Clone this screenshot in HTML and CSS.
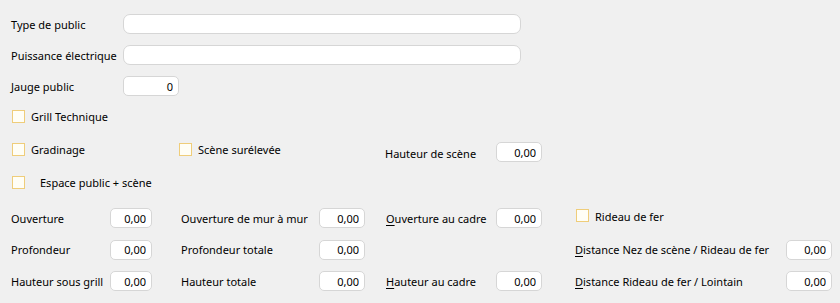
FILE: index.html
```html
<html>
<head>
    <title>Public et scène</title>
    <link rel="stylesheet" href="styles.css">
</head>
<body>
    <div class="panel">
        <div class="field wide first">
            <label class="lbl">Type de public</label>
            <input type="text" class="txt long" value="" />
        </div>
        <div class="field wide">
            <label class="lbl">Puissance électrique</label>
            <input type="text" class="txt long" value="" />
        </div>
        <div class="field wide third">
            <label class="lbl">Jauge public</label>
            <input type="text" class="txt num jauge" value="0" />
        </div>

        <div class="check-row grill">
            <span class="check"></span><span class="check-label">Grill Technique</span>
        </div>

        <div class="stage-row">
            <div class="check-row gradin">
                <span class="check"></span><span class="check-label">Gradinage</span>
            </div>
            <div class="check-row raised">
                <span class="check"></span><span class="check-label">Scène surélevée</span>
            </div>
            <div class="stage-height">
                <label class="lbl">Hauteur de scène</label>
                <input type="text" class="txt num" value="0,00" />
            </div>
        </div>

        <div class="check-row espace">
            <span class="check"></span><span class="check-label spaced">Espace public + scène</span>
        </div>

        <div class="measures">
            <label class="cell">Ouverture</label>
            <div class="cell"><input type="text" class="txt num small" value="0,00" /></div>
            <label class="cell">Ouverture de mur à mur</label>
            <div class="cell"><input type="text" class="txt num" value="0,00" /></div>
            <label class="cell"><u>O</u>uverture au cadre</label>
            <div class="cell"><input type="text" class="txt num" value="0,00" /></div>
            <div class="cell top"><span class="check"></span><span class="check-label">Rideau de fer</span></div>
            <div class="cell"></div>

            <label class="cell">Profondeur</label>
            <div class="cell"><input type="text" class="txt num small" value="0,00" /></div>
            <label class="cell">Profondeur totale</label>
            <div class="cell"><input type="text" class="txt num" value="0,00" /></div>
            <div class="cell"></div>
            <div class="cell"></div>
            <label class="cell"><u>D</u>istance Nez de scène / Rideau de fer</label>
            <div class="cell"><input type="text" class="txt num" value="0,00" /></div>

            <label class="cell">Hauteur sous grill</label>
            <div class="cell"><input type="text" class="txt num small" value="0,00" /></div>
            <label class="cell">Hauteur totale</label>
            <div class="cell"><input type="text" class="txt num" value="0,00" /></div>
            <label class="cell"><u>H</u>auteur au cadre</label>
            <div class="cell"><input type="text" class="txt num" value="0,00" /></div>
            <label class="cell"><u>D</u>istance Rideau de fer / Lointain</label>
            <div class="cell"><input type="text" class="txt num" value="0,00" /></div>
        </div>
    </div>
</body>
</html>
```

FILE: styles.css
```css
body {
    margin: 0;
    background: #f0f0f0;
    font-family: "Noto Sans", "Open Sans", sans-serif;
    font-size: 11px;
    color: #000;
}
.panel {
    padding: 14px 0 0 11px;
}
.field {
    display: flex;
    align-items: center;
    height: 20px;
    margin-bottom: 11px;
}
.field.third {
    margin-top: 1px;
    margin-bottom: 14px;
}
.field .lbl {
    width: 112px;
    white-space: nowrap;
}
.txt {
    box-sizing: border-box;
    height: 20px;
    border: 1px solid #d6d6d6;
    border-radius: 5px;
    background: #fff;
    font-family: inherit;
    font-size: 11px;
    color: #000;
    padding: 0 5px;
    margin: 0;
    outline: none;
    width: 46px;
}
.txt.long {
    width: 398px;
    border-radius: 7px;
}
.txt.jauge {
    width: 56px;
}
.txt.small {
    width: 42px;
}
.num {
    text-align: right;
}
.check-row {
    display: flex;
    align-items: center;
    height: 13px;
}
.check {
    display: inline-block;
    box-sizing: border-box;
    width: 13px;
    height: 13px;
    border: 1px solid #efcd7a;
    background: #fffef6;
    margin-left: 1px;
    flex-shrink: 0;
}
.check-label {
    margin-left: 6px;
    white-space: nowrap;
}
.check-label.spaced {
    margin-left: 15px;
}
.stage-row {
    display: flex;
    align-items: flex-start;
    margin-top: 19px;
    height: 20px;
}
.stage-row .gradin {
    margin-top: 1px;
    width: 167px;
}
.stage-row .raised {
    margin-top: 1px;
    width: 207px;
}
.stage-height {
    display: flex;
    align-items: center;
}
.stage-height .lbl {
    width: 111px;
    padding-top: 2px;
    white-space: nowrap;
}
.espace {
    margin-top: 14px;
}
.measures {
    display: grid;
    grid-template-columns: 99px 71px 138px 67px 110px 79px 211px 46px;
    grid-auto-rows: 20px;
    row-gap: 11.5px;
    margin-top: 19px;
}
.cell {
    display: flex;
    align-items: center;
    white-space: nowrap;
}
.cell.top {
    align-items: flex-start;
    padding-top: 1px;
}
u {
    text-decoration-thickness: 1px;
    text-underline-offset: 2px;
}
```
